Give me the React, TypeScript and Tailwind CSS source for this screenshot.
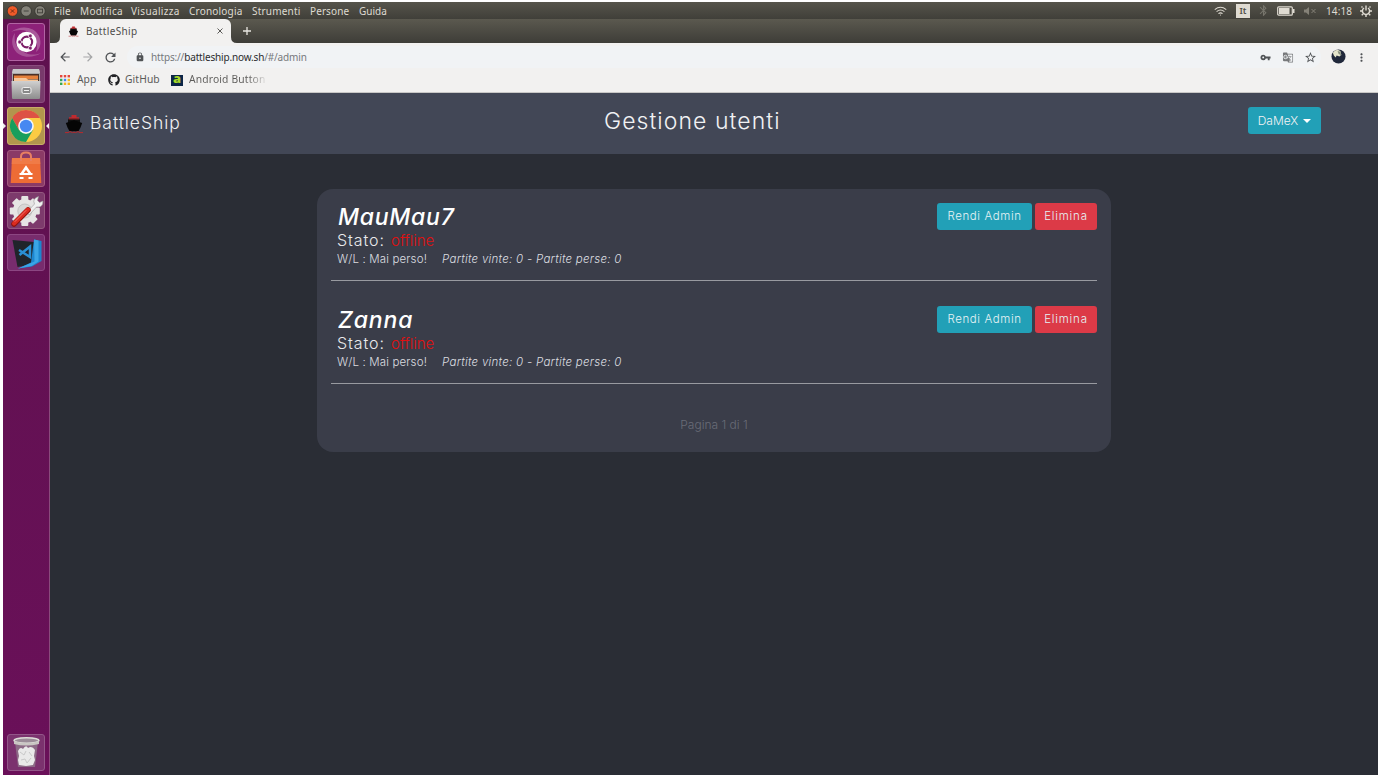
import type { ReactNode } from "react";
import { FaGithub } from "react-icons/fa";
import { MdArrowBack, MdArrowForward, MdRefresh, MdLock, MdVpnKey, MdGTranslate, MdStarBorder, MdMoreVert, MdBluetooth } from "react-icons/md";

function Ship({ className }: { className: string }) {
  return (
    <svg viewBox="0 0 18 20" className={className}>
      <path d="M4 5V3.200h2.500V1h5v2.200H14V5z" fill="#c22a2e" />
      <path d="M3 9V4.800h12V9z" fill="#101010" />
      <path d="M3 5.600 5 4h8l2 1.600z" fill="#8e2428" />
      <path d="M.8 9 9 6.200 17.200 9l-1.700 4.500-2 3.800h-9l-2-3.800z" fill="#050505" />
      <path d="M0 18.600h3l2-1 2.500 1 1.500-.5 1.500.5 2.500-1 2 1h3" fill="none" stroke="#b9292d" strokeWidth="1" />
    </svg>
  );
}

function Tile({ children, className }: { children: ReactNode; className: string }) {
  return (
    <div className={`flex h-[37.500px] w-[38px] shrink-0 items-center justify-center rounded-[3px] border ${className}`}>
      {children}
    </div>
  );
}

function UbuntuIcon() {
  return (
    <svg viewBox="0 0 36 36" className="h-9 w-9">
      <path d="M3 8C12 1 26 2 31 12c3 7 1 13-3 16 2-7 1-12-3-16C19 5 11 5 3 8z" fill="#fff" opacity=".25" />
      <path d="M33 29C24 35 11 34 6 25c-3-6-2-12 1-16-1 7 0 12 4 15 6 7 14 8 22 5z" fill="#fff" opacity=".22" />
      <circle cx="18.500" cy="18" r="10.200" fill="#fff" />
      <circle cx="18.800" cy="18" r="5.300" fill="none" stroke="#7c1f68" strokeWidth="2.200" />
      <path d="M18.800 18h-9M18.800 18l4.500-7.800M18.800 18l4.500 7.800" stroke="#fff" strokeWidth="1.200" />
      <circle cx="18.800" cy="18" r="4" fill="#fff" />
      <circle cx="11.700" cy="18" r="1.900" fill="#7c1f68" stroke="#fff" strokeWidth=".6" />
      <circle cx="22.300" cy="11.900" r="1.900" fill="#7c1f68" stroke="#fff" strokeWidth=".6" />
      <circle cx="22.300" cy="24.100" r="1.900" fill="#7c1f68" stroke="#fff" strokeWidth=".6" />
    </svg>
  );
}

function FilesIcon() {
  return (
    <svg viewBox="0 0 36 36" className="h-9 w-9">
      <defs>
        <linearGradient id="cab" x1="0" y1="0" x2="0" y2="1">
          <stop offset="0" stopColor="#d0d0d0" />
          <stop offset="1" stopColor="#8d8d8d" />
        </linearGradient>
      </defs>
      <path d="M5 3h26l1 4v14H4V7z" fill="#a9a9a9" />
      <path d="M5 3h26l1 4H4z" fill="#c9c9c9" />
      <path d="M5 8h26v8H5z" fill="#4b3026" />
      <path d="M6 9.500h24V13H6z" fill="#e5813b" />
      <path d="M6 12h12l2 1.500h10V16H6z" fill="#f6c79b" />
      <path d="M3.500 15h29l-.5 17q0 1-1 1H5q-1 0-1-1z" fill="url(#cab)" />
      <rect x="14" y="21.500" width="9" height="6" rx="1.500" fill="#888" stroke="#eee" strokeWidth="1" />
      <path d="M16 24.500h5" stroke="#eee" strokeWidth="1" />
    </svg>
  );
}

function ChromeIcon() {
  return (
    <svg viewBox="0 0 36 36" className="h-9 w-9">
      <circle cx="18" cy="18" r="16" fill="#fbcb43" />
      <path d="M18 10h13.860A16 16 0 0 0 4.140 10L11 22z" fill="#dd5144" />
      <path d="M4.140 10A16 16 0 0 0 18 34l7-12-7 4-7-4z" fill="#189e5d" />
      <circle cx="18" cy="18" r="7.800" fill="#f3f6fb" />
      <circle cx="18" cy="18" r="6.200" fill="#4688f1" />
    </svg>
  );
}

function StoreIcon() {
  return (
    <svg viewBox="0 0 36 36" className="h-9 w-9">
      <path d="M4 8h28l1.300 25H2.700z" fill="#ee6c35" />
      <path d="M4 8h28l.3 6H3.700z" fill="#f07b47" />
      <path d="M13 11V6.500q0-4 5-4t5 4V11" fill="none" stroke="#e88061" strokeWidth="2" />
      <path d="m13.500 24 4.500-6.500 4.500 6.500" fill="none" stroke="#fff" strokeWidth="2.500" />
      <path d="M11.500 24h13M11.500 28h4M20.500 28h4" fill="none" stroke="#fff" strokeWidth="2" />
    </svg>
  );
}

const teeth = [0, 45, 90, 135, 180, 225, 270, 315];

function SettingsIcon() {
  return (
    <svg viewBox="0 0 36 36" className="h-9 w-9">
      {teeth.map((a) => (
        <rect key={a} x="13.300" y="3" width="7" height="9" rx="1" fill="#e6e5e4" transform={`rotate(${a} 16.800 18)`} />
      ))}
      <circle cx="16.800" cy="18" r="12" fill="#e6e5e4" />
      <circle cx="16.800" cy="18" r="7" fill="#d8d7d6" stroke="#c4c3c2" />
      <path d="m19 19 7.500-8q-2.500-5.500 4-7.500l-1 4 2 2 3.500-1.500q0 7-6.500 6l-7.500 8z" fill="#f0f0f0" stroke="#999" strokeWidth=".6" />
      <path d="M6 31 20 17" stroke="#8c130d" strokeWidth="5.500" strokeLinecap="round" />
      <path d="M6 30.500 20 16.500" stroke="#dc2b20" strokeWidth="4" strokeLinecap="round" />
      <path d="M7 28.500 18 17.500" stroke="#f07468" strokeWidth="1" strokeLinecap="round" />
    </svg>
  );
}

function CodeIcon() {
  return (
    <svg viewBox="0 0 36 36" className="h-9 w-9">
      <path d="m4.500 5 21.500 2v22L9.500 32z" fill="#20242a" />
      <path d="m26 4.500 7.500 1.500v20L24 31.500 10 33.500l13-6z" fill="#1d86cf" />
      <path d="m26 4.500 4.500 1v21L23.500 31l-13.500 2.500 16.500-7z" fill="#3aa5e6" />
      <path d="m11 15 11 7V11.500L11.500 20" fill="none" stroke="#2a8fd4" strokeWidth="2.500" />
    </svg>
  );
}

function TrashIcon() {
  return (
    <svg viewBox="0 0 36 36" className="h-9 w-9">
      <path d="m7 8 3 25h17l3-25z" fill="#8c6a86" />
      <path d="M10 17q2-5 5-2 3-5 5-1 4-3 7 2l-1 6 1 4-2 5-7 1-7-1-1-5 1-4z" fill="#e9e9e9" />
      <path d="m12 18 4 3 2-4M21 18l3 4M13 26l4-1 2 4 4-5" fill="none" stroke="#c8c8c8" />
      <ellipse cx="18.500" cy="6.500" rx="12.500" ry="2.800" fill="#9b8c98" stroke="#deddd9" strokeWidth="1.500" />
      <path d="M6 7v3q12 3 25 0V7q-12 4.500-25 0z" fill="#c9c6c3" />
    </svg>
  );
}

function Launcher() {
  return (
    <aside className="relative flex w-[47px] shrink-0 flex-col items-center gap-[4.700px] border-r border-[#8a4a7c] bg-gradient-to-b from-[#5e114e] to-[#6a1059] pt-[4px] pr-[1px] pb-[4px]">
      <Tile className="border-[#b264a3] bg-[#8d2179]"><UbuntuIcon /></Tile>
      <Tile className="border-[#8b4b7e] bg-[#783a6b]"><FilesIcon /></Tile>
      <Tile className="border-[#c8ac68] bg-[#b2954d]"><ChromeIcon /></Tile>
      <Tile className="border-[#a3587f] bg-[#8b3a66]"><StoreIcon /></Tile>
      <Tile className="border-[#93577f] bg-[#7d3a6c]"><SettingsIcon /></Tile>
      <Tile className="border-[#8c4682] bg-[#782c6d]"><CodeIcon /></Tile>
      <Tile className="mt-auto border-[#925688] bg-[#7b326e]"><TrashIcon /></Tile>
      <svg viewBox="0 0 3 6" className="absolute top-[104px] left-0 h-[6px] w-[3px]"><path d="M0 0 3 3 0 6z" fill="#eee" /></svg>
      <svg viewBox="0 0 3 6" className="absolute top-[104px] right-0 h-[6px] w-[3px]"><path d="M3 0 0 3l3 3z" fill="#eee" /></svg>
    </aside>
  );
}

function SystemBar() {
  return (
    <header className="flex h-[17px] shrink-0 items-center bg-gradient-to-b from-[#56544b] to-[#403f39] text-[10px] leading-none whitespace-nowrap text-[#dfdbd2]">
      <svg viewBox="0 0 42 12" className="ml-[3px] h-[12px] w-[42px] shrink-0">
        <circle cx="6.500" cy="6" r="5.300" fill="#ef5a29" stroke="#35342f" strokeWidth=".8" />
        <path d="m4.800 4.300 3.400 3.400m0-3.400L4.800 7.700" stroke="#752b12" />
        <circle cx="20.200" cy="6" r="5.300" fill="#85837a" stroke="#35342f" strokeWidth=".8" />
        <path d="M17.700 6h5" stroke="#45443e" />
        <circle cx="34" cy="6" r="5.300" fill="#85837a" stroke="#35342f" strokeWidth=".8" />
        <rect x="31.500" y="4.200" width="5" height="3.600" fill="none" stroke="#45443e" />
      </svg>
      <nav className="ml-[6px] flex">
        <span className="w-[26px] tracking-[0.200px]">File</span>
        <span className="w-[51px] tracking-[0.350px]">Modifica</span>
        <span className="w-[58px] tracking-[0.350px]">Visualizza</span>
        <span className="w-[63px] tracking-[0.200px]">Cronologia</span>
        <span className="w-[58px] tracking-[0.200px]">Strumenti</span>
        <span className="w-[49px] tracking-[0.100px]">Persone</span>
        <span>Guida</span>
      </nav>
      <div className="ml-auto flex items-center">
        <svg viewBox="0 0 14 12" className="mr-[9px] h-[12px] w-[13px]" fill="none" stroke="#dfdbd2" strokeWidth="1.100">
          <path d="M.8 4.500q6.200-5 12.400 0M2.800 6.700q4.200-3.400 8.400 0M4.800 8.900q2.200-1.800 4.400 0" />
          <circle cx="7" cy="10.300" r=".6" fill="#dfdbd2" stroke="none" />
        </svg>
        <span className="mr-[7px] flex h-[14px] w-[14px] items-center justify-center bg-[#dfdbd2] text-[9px] font-semibold text-[#504e46]">It</span>
        <MdBluetooth className="mr-[7px] h-[13px] w-[13px] text-[#77756c]" />
        <svg viewBox="0 0 18 10" className="mr-[8px] h-[10px] w-[18px]">
          <rect x=".7" y=".8" width="14.600" height="8.400" rx="1" fill="none" stroke="#dfdbd2" strokeWidth="1.200" />
          <path d="M2 2h10.500v6H2zM16 3h1.500v4H16z" fill="#dfdbd2" />
        </svg>
        <svg viewBox="0 0 14 10" className="mr-[9px] h-[10px] w-[14px] text-[#858278]">
          <path d="M1 3.500h2L6 1v8L3 6.500H1z" fill="currentColor" />
          <path d="m8.500 3 4 4m0-4-4 4" stroke="currentColor" strokeWidth="1" />
        </svg>
        <span className="mr-[8px] w-[26px] pt-[1px] text-[10px] tracking-[0.100px]">14:18</span>
        <svg viewBox="0 0 12 12" className="mr-[6px] h-[12px] w-[12px]" fill="none" stroke="#dfdbd2">
          <path d="M4 3a3.600 3.600 0 1 0 4 0" strokeWidth="1.500" />
          <path d="M6 .5v5M9.500 2.500l1-1M2.500 2.500l-1-1M9.700 6H12M2.300 6H0M8.900 8.900l1.400 1.400M3.100 8.900l-1.400 1.400M6 9.700V12" strokeWidth="1.400" />
        </svg>
      </div>
    </header>
  );
}

const appColors = ["#e4483d", "#e4483d", "#e4483d", "#36a852", "#4285f4", "#f3b61d", "#36a852", "#f3b61d", "#f3b61d"];

function BrowserChrome() {
  return (
    <div className="shrink-0 whitespace-nowrap">
      <div className="flex h-[24px] items-end bg-gradient-to-b from-[#5b594f] to-[#3e3d38] pl-[4px]">
        <svg viewBox="0 0 6 6" className="h-[6px] w-[6px]"><path d="M6 0v6H0q6 0 6-6z" fill="#f2f1f0" /></svg>
        <div className="flex h-[24px] w-[171px] items-center rounded-t-[6px] bg-[#f2f1f0] pl-[8px] text-[10px] text-[#4e4d4b]">
          <Ship className="h-[11px] w-[11px]" />
          <span className="ml-[7px] w-[131px] tracking-[0.350px]">BattleShip</span>
          <svg viewBox="0 0 6 6" className="h-[6px] w-[6px]"><path d="m.5.5 5 5m0-5-5 5" stroke="#5a5957" /></svg>
        </div>
        <svg viewBox="0 0 6 6" className="h-[6px] w-[6px]"><path d="M0 0v6h6Q0 6 0 0z" fill="#f2f1f0" /></svg>
        <svg viewBox="0 0 8 8" className="mb-[8px] ml-[6px] h-[8px] w-[8px]"><path d="M4 0v8M0 4h8" stroke="#e8e6e1" strokeWidth="1.300" /></svg>
      </div>
      <div className="h-[50px] border-b border-[#c9c8c6] bg-[#f2f1f0]">
        <div className="flex h-[28px] items-center text-[#505356]">
          <MdArrowBack className="ml-[8px] h-[14px] w-[14px]" />
          <MdArrowForward className="ml-[9px] h-[14px] w-[14px] text-[#a5a6a7]" />
          <MdRefresh className="ml-[8px] h-[15px] w-[15px]" />
          <div className="ml-[9px] flex h-[22px] w-[1194px] items-center rounded-full bg-[#f1f3f5]">
            <MdLock className="ml-[8px] h-[10px] w-[10px]" />
            <span className="ml-[6px] text-[10px] tracking-[-0.160px] text-[#76797c]">https://<span className="text-[#2b2c2e]">battleship.now.sh</span>/#/admin</span>
            <MdVpnKey className="ml-auto h-[11px] w-[11px]" />
            <MdGTranslate className="ml-[11px] h-[11px] w-[12px] text-[#77797b]" />
            <MdStarBorder className="mr-[4px] ml-[10px] h-[13px] w-[13px]" />
          </div>
          <svg viewBox="0 0 16 16" className="-mt-px ml-[10px] h-[15px] w-[15px]">
            <circle cx="8" cy="8" r="7.500" fill="#20283a" />
            <path d="M2 4Q4 1 7 .8L10 2l1 4-2 2-3-1-1 2-2-2z" fill="#e6e6cc" />
            <path d="m7 2 3 1 1 4-3-2z" fill="#899180" />
          </svg>
          <MdMoreVert className="ml-[9px] h-[13px] w-[13px]" />
        </div>
        <div className="flex h-[18px] items-center text-[10.300px] text-[#5c5b59]">
          <svg viewBox="0 0 10 10" className="ml-[10px] h-[10px] w-[10px]">
            {appColors.map((c, i) => (
              <rect key={i} x={(i % 3) * 3.800} y={Math.floor(i / 3) * 3.800} width="2.400" height="2.400" fill={c} />
            ))}
          </svg>
          <span className="ml-[7px] w-[31px]">App</span>
          <FaGithub className="h-[12px] w-[12px] text-[#202124]" />
          <span className="ml-[5px] w-[46px] tracking-[0.100px]">GitHub</span>
          <span className="flex h-[11px] w-[12px] items-center justify-center bg-[#0c2547] text-[13px] leading-none font-black text-[#a4d629]"><span className="-mt-[4px]">a</span></span>
          <span className="ml-[6px] w-[79px] overflow-hidden bg-gradient-to-r from-[#5c5b59] from-75% to-transparent bg-clip-text tracking-[0.150px] text-transparent">Android Button</span>
        </div>
      </div>
    </div>
  );
}

function UserRow({ name, nameClass }: { name: string; nameClass: string }) {
  return (
    <article className="h-[77.500px] border-b border-[#989aa0] pl-[6px]">
      <div className="flex items-start">
        <div className="flex-1">
          <h2 className={`h-[27px] pl-[1px] text-[23px] leading-[28px] font-medium text-white italic ${nameClass}`}>{name}</h2>
          <p className="flex h-[21px] items-center text-[16px] leading-[21px] text-[#e9eaec]">
            <span className="w-[54px] font-light tracking-[0.900px]">Stato:</span>
            <span className="text-[15px] font-light text-[#e01010]">offline</span>
          </p>
          <p className="flex h-[17px] items-center text-[11.500px] leading-[17px] text-[#dcdde0]">
            <span className="w-[105px] font-light tracking-[0.150px]">W/L : Mai perso!</span>
            <em className="font-light tracking-[0.280px]">Partite vinte: 0 - Partite perse: 0</em>
          </p>
        </div>
        <div className="flex gap-[3px] text-[11.500px] text-[#e6f3f5]">
          <button className="h-[27px] w-[95px] rounded-[3px] bg-[#22a0b7] font-light tracking-[0.600px]">Rendi Admin</button>
          <button className="h-[27px] w-[62px] rounded-[3px] bg-[#dc3a47] font-light tracking-[0.780px]">Elimina</button>
        </div>
      </div>
    </article>
  );
}

function AdminPage() {
  return (
    <main className="flex min-h-0 flex-1 flex-col bg-[#2a2d35] font-['Inter',sans-serif] whitespace-nowrap">
      <header className="flex h-[61px] shrink-0 bg-[#424756] text-[#f1f2f4]">
        <div className="flex w-[554px] items-center pl-[15px]">
          <Ship className="h-[20px] w-[18px]" />
          <span className="ml-[7px] text-[17.500px] font-light tracking-[0.950px]">BattleShip</span>
        </div>
        <h1 className="h-[54px] w-[644px] text-[23px] leading-[56px] font-light tracking-[1.050px]">Gestione utenti</h1>
        <button className="mt-[14px] flex h-[27px] w-[73px] items-center justify-center gap-[5px] rounded-[3px] bg-[#22a0b7] text-[12px] font-light">
          DaMeX
          <span className="border-x-[4px] border-t-[4px] border-x-transparent border-t-white" />
        </button>
      </header>
      <section className="mt-[35px] ml-[267px] flex h-[263px] w-[794px] flex-col gap-[25.500px] rounded-[16px] bg-[#3a3d49] px-[14px] pt-[14px]">
        <UserRow name="MauMau7" nameClass="tracking-[0.750px]" />
        <UserRow name="Zanna" nameClass="tracking-[0.900px]" />
        <p className="mt-[7px] text-center text-[12px] leading-[17px] font-light text-[#696c77]">Pagina 1 di 1</p>
      </section>
    </main>
  );
}

export default function App() {
  return (
    <div className="h-[781px] w-[1385px] overflow-hidden bg-white pt-[2px] pl-[3px] font-['Noto_Sans',sans-serif]">
      <div className="flex h-[773px] w-[1375px] flex-col">
        <SystemBar />
        <div className="flex min-h-0 flex-1">
          <Launcher />
          <div className="flex min-w-0 flex-1 flex-col">
            <BrowserChrome />
            <AdminPage />
          </div>
        </div>
      </div>
    </div>
  );
}
